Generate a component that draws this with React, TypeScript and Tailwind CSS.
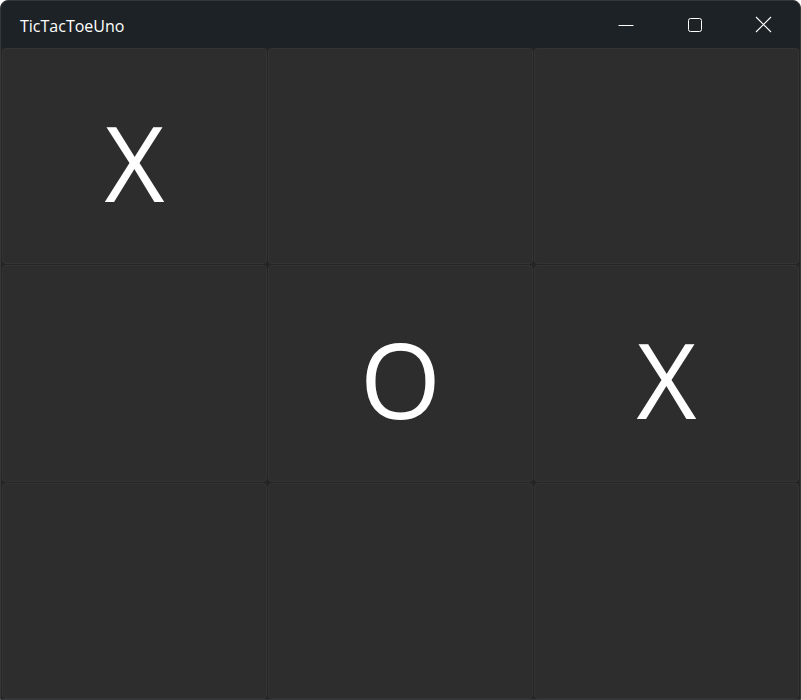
import React from 'react';

const board = ['X', '', '', '', 'O', 'X', '', '', ''];

function TitleBar() {
  return (
    <div className="flex h-[47px] items-center pl-[19px] shrink-0">
      <span className="text-[16px] text-white font-['Open_Sans',sans-serif] translate-y-[1px]">TicTacToeUno</span>
      <div className="ml-auto flex h-full items-center mr-[2px]">
        <button className="flex h-full w-[69px] items-center justify-center">
          <svg width="16" height="16" viewBox="0 0 16 16">
            <path d="M0.5 8.5h15" stroke="white" strokeWidth="1" />
          </svg>
        </button>
        <button className="flex h-full w-[69px] items-center justify-center">
          <svg width="16" height="16" viewBox="0 0 16 16">
            <rect x="1.5" y="1.5" width="13" height="13" rx="2" fill="none" stroke="white" strokeWidth="1" />
          </svg>
        </button>
        <button className="flex h-full w-[69px] items-center justify-center">
          <svg width="17" height="17" viewBox="0 0 17 17">
            <path d="M1 1L16 16M16 1L1 16" stroke="white" strokeWidth="1.1" />
          </svg>
        </button>
      </div>
    </div>
  );
}

export default function App() {
  return (
    <div className="w-[801px] h-[700px] bg-[#1c2226] border border-[#34383b] rounded-t-[8px] flex flex-col overflow-hidden">
      <TitleBar />
      <div className="grid flex-1 grid-cols-3 grid-rows-3 gap-px bg-[#252525] px-px">
        {board.map((mark, i) => (
          <div
            key={i}
            className="flex items-center justify-center rounded-[4px] border border-[#343434] bg-[#2e2d2d]"
          >
            <span className="text-[104px] leading-none text-white font-['Open_Sans',sans-serif] font-normal translate-y-[6px]">
              {mark}
            </span>
          </div>
        ))}
      </div>
    </div>
  );
}
